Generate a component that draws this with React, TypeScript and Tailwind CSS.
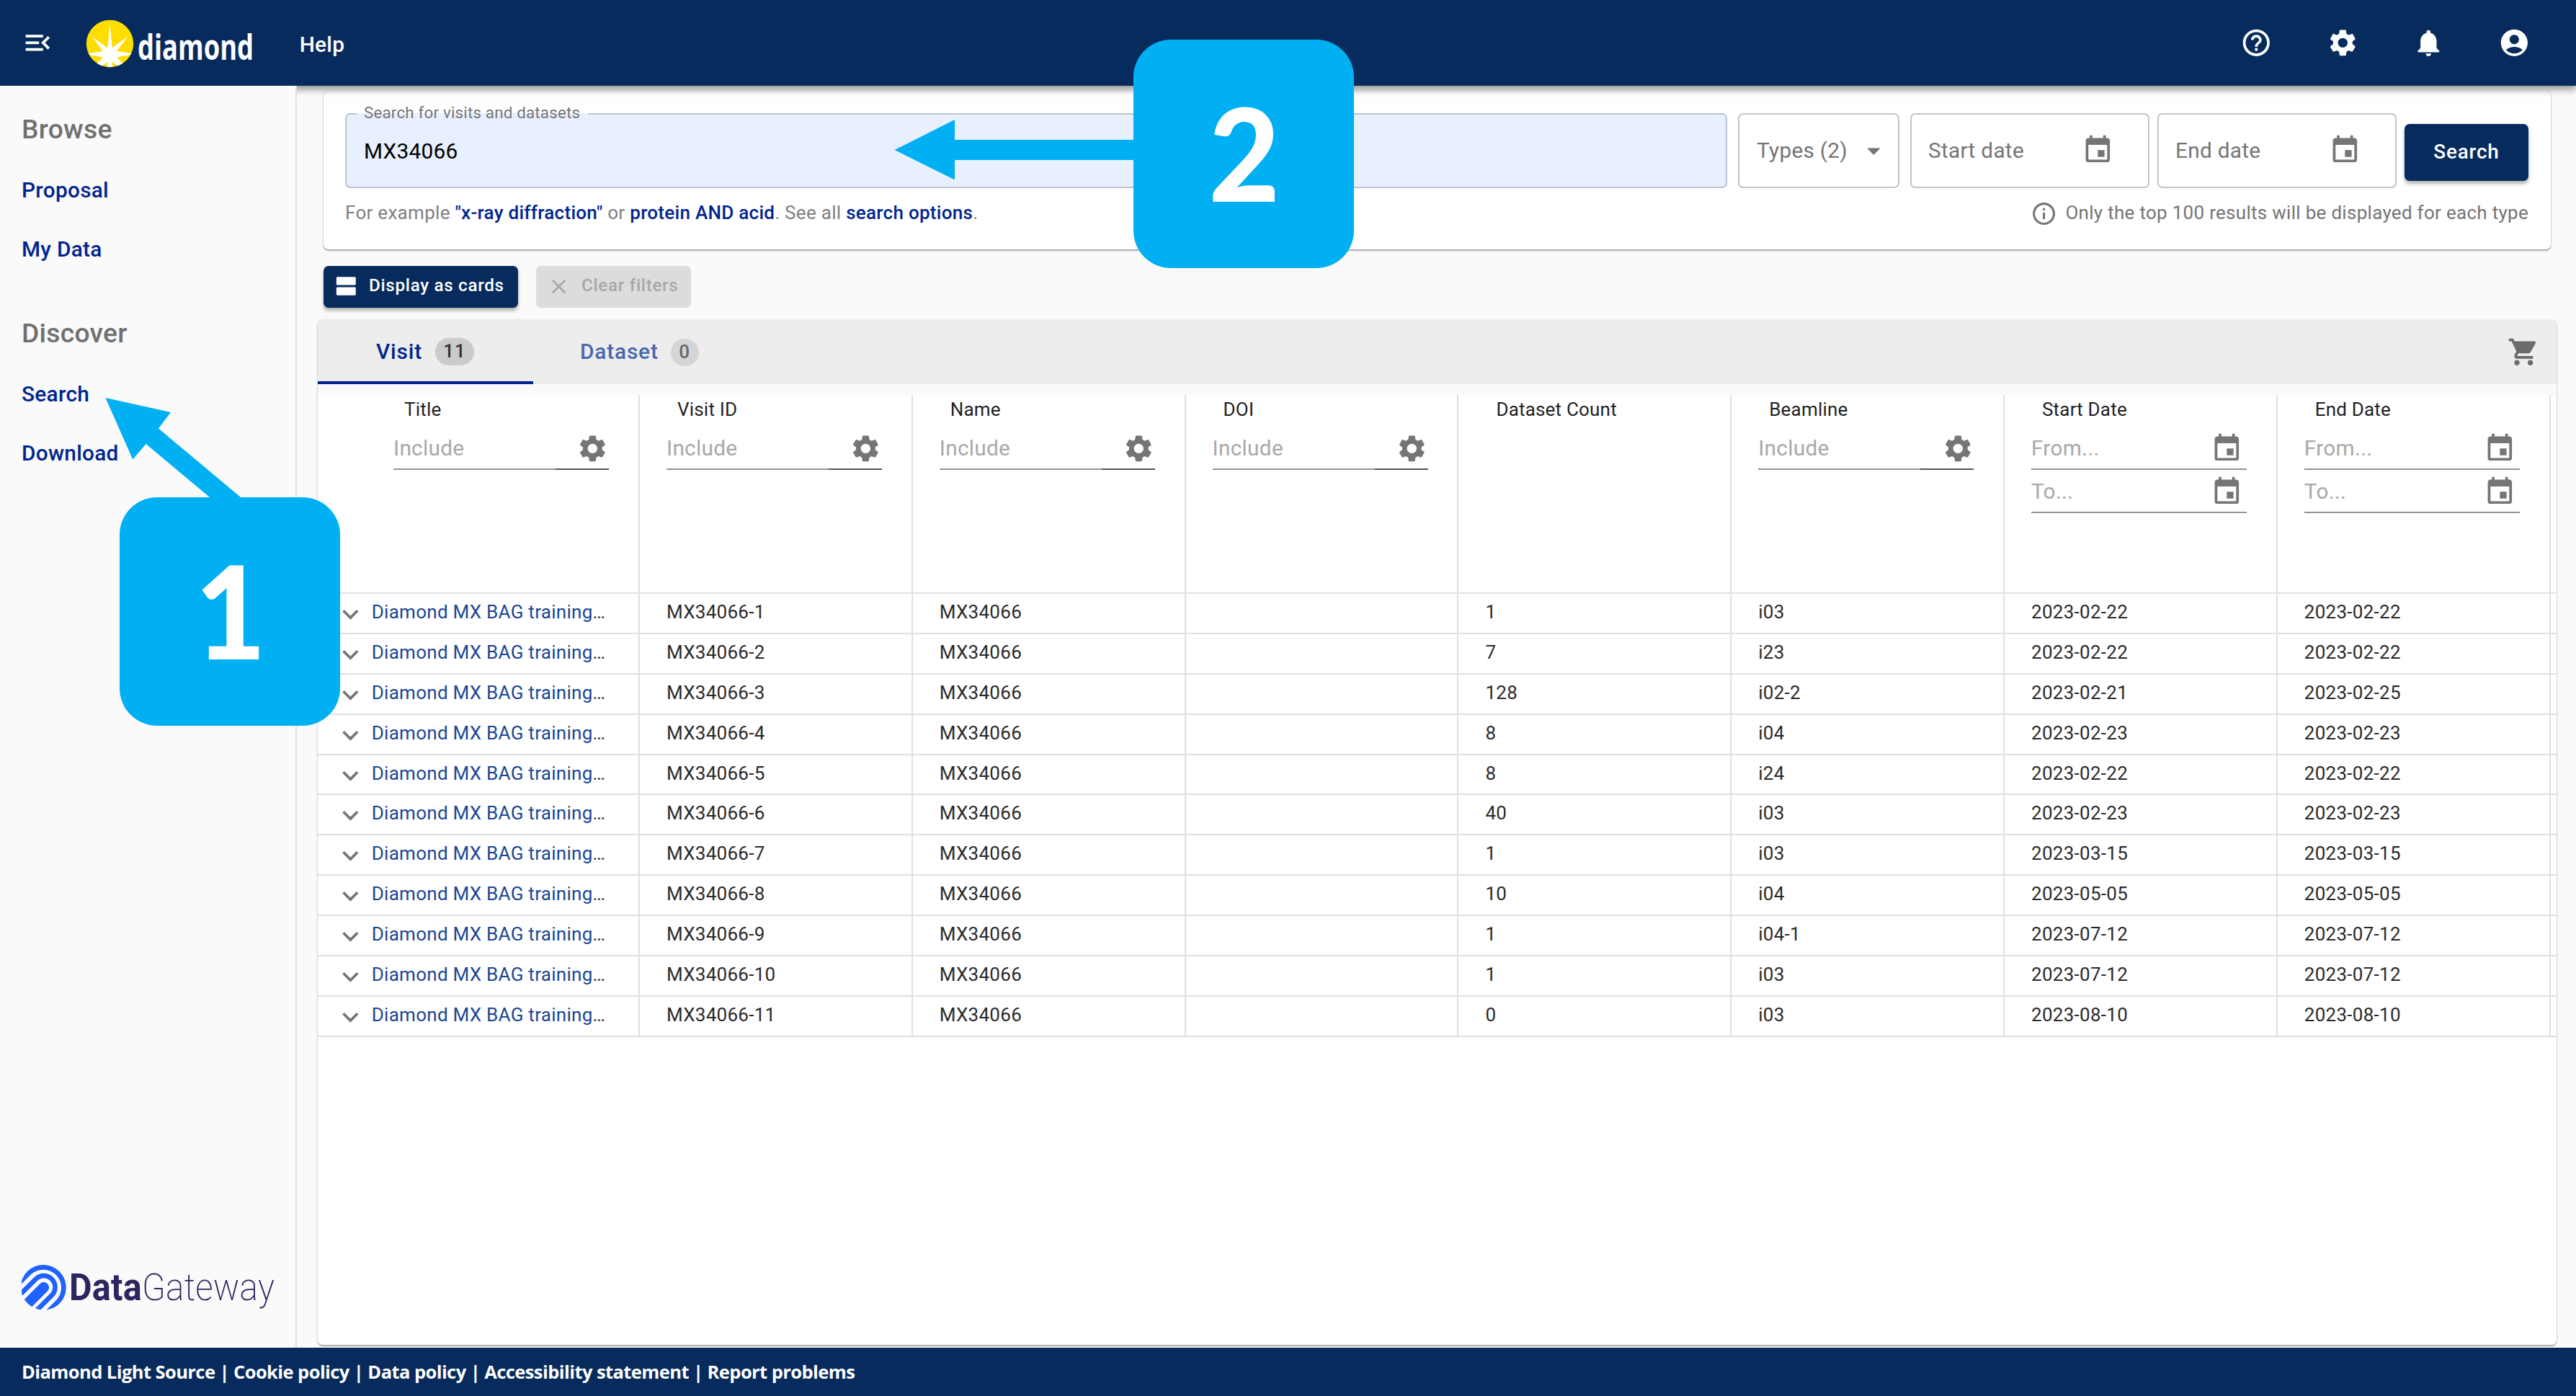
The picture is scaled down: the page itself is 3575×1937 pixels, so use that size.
import React from "react";
import {
  MdAccountCircle,
  MdArrowDropDown,
  MdClose,
  MdEvent,
  MdExpandMore,
  MdHelpOutline,
  MdInfoOutline,
  MdMenuOpen,
  MdNotifications,
  MdSettings,
  MdShoppingCart,
} from "react-icons/md";

const GRID = "grid grid-cols-[447px_repeat(7,378.8px)_1fr]";

type Filter = "text" | "date" | "none";
const columns: { label: string; filter: Filter }[] = [
  { label: "Title", filter: "text" },
  { label: "Visit ID", filter: "text" },
  { label: "Name", filter: "text" },
  { label: "DOI", filter: "text" },
  { label: "Dataset Count", filter: "none" },
  { label: "Beamline", filter: "text" },
  { label: "Start Date", filter: "date" },
  { label: "End Date", filter: "date" },
];

const rows: string[][] = [
  ["MX34066-1", "MX34066", "", "1", "i03", "2023-02-22", "2023-02-22"],
  ["MX34066-2", "MX34066", "", "7", "i23", "2023-02-22", "2023-02-22"],
  ["MX34066-3", "MX34066", "", "128", "i02-2", "2023-02-21", "2023-02-25"],
  ["MX34066-4", "MX34066", "", "8", "i04", "2023-02-23", "2023-02-23"],
  ["MX34066-5", "MX34066", "", "8", "i24", "2023-02-22", "2023-02-22"],
  ["MX34066-6", "MX34066", "", "40", "i03", "2023-02-23", "2023-02-23"],
  ["MX34066-7", "MX34066", "", "1", "i03", "2023-03-15", "2023-03-15"],
  ["MX34066-8", "MX34066", "", "10", "i04", "2023-05-05", "2023-05-05"],
  ["MX34066-9", "MX34066", "", "1", "i04-1", "2023-07-12", "2023-07-12"],
  ["MX34066-10", "MX34066", "", "1", "i03", "2023-07-12", "2023-07-12"],
  ["MX34066-11", "MX34066", "", "0", "i03", "2023-08-10", "2023-08-10"],
];

function DiamondLogo() {
  return (
    <svg className="ml-[45px] h-[80px] w-[236px] shrink-0 overflow-visible" viewBox="0 -4 236 80">
      <defs>
        <clipPath id="sun">
          <circle cx="32.5" cy="36.5" r="32.7" />
        </clipPath>
      </defs>
      <circle cx="32.5" cy="36.5" r="32.7" fill="#ffdd00" />
      <g clipPath="url(#sun)" fill="#fff">
        <circle cx="32.5" cy="52" r="10.5" />
        <path d="M32.5 8 L36 46 L29 46Z" />
        <path d="M8 27 L30 43 L25 50Z" />
        <path d="M57 27 L35 43 L40 50Z" />
        <path d="M-2 51 L26 46.500 L26 56Z" />
        <path d="M67 51 L39 46.500 L39 56Z" />
        <path d="M25 53 L32 59 L18 71 L13 66Z" />
        <path d="M40 53 L33 59 L47 71 L52 66Z" />
        <path d="M29.500 58 L35.500 58 L36.500 73 L28.500 73Z" />
      </g>
      <text x="71" y="59" fill="#fff" fontFamily="'Open Sans', sans-serif" fontWeight="700" fontSize="49" textLength="161" lengthAdjust="spacingAndGlyphs">
        diamond
      </text>
    </svg>
  );
}

function GatewayLogo() {
  return (
    <svg className="h-[80px] w-[362px]" viewBox="0 0 362 80">
      <defs>
        <clipPath id="gw">
          <circle cx="30.700" cy="36" r="31.700" />
        </clipPath>
      </defs>
      <g clipPath="url(#gw)">
        <g fill="none" stroke="#1f62ff" strokeWidth="6.700">
          <path d="M-9.300 36 L10.700 16 A28.300 28.300 0 0 1 50.700 56 L30.700 76" />
          <path d="M-10.500 54.800 L19.500 24.800 A15.800 15.800 0 0 1 41.900 47.200 L11.900 77.200" />
        </g>
        <path d="M-4.500 61.200 L25.500 31.200 A7.300 7.300 0 0 1 35.900 41.600 L5.900 71.600Z" fill="#1f62ff" />
      </g>
      <text x="66" y="54" fill="#2b2660" fontFamily="Roboto, sans-serif" fontSize="51" fontWeight="700" textLength="101" lengthAdjust="spacingAndGlyphs">
        Data
      </text>
      <text x="167" y="54" fill="#2b2660" fontFamily="Roboto, sans-serif" fontSize="51" fontWeight="200" textLength="184" lengthAdjust="spacingAndGlyphs">
        Gateway
      </text>
    </svg>
  );
}

function AgendaIcon() {
  return (
    <svg className="-mt-[2px] size-[34px]" viewBox="0 0 24 24" fill="currentColor">
      <path d="M20 13H3c-.55 0-1 .45-1 1v6c0 .55.45 1 1 1h17c.55 0 1-.45 1-1v-6c0-.55-.45-1-1-1zm0-10H3c-.55 0-1 .45-1 1v6c0 .55.45 1 1 1h17c.55 0 1-.45 1-1V4c0-.55-.45-1-1-1z" />
    </svg>
  );
}

function Header() {
  return (
    <header className="relative z-10 flex h-[119px] shrink-0 items-center bg-[#072b5d] text-white shadow-[0_4px_8px_rgba(0,0,0,0.3),0_8px_10px_rgba(0,0,0,0.14)]">
      <MdMenuOpen className="ml-[30px] size-[44.700px]" />
      <DiamondLogo />
      <span className="mt-[4px] ml-[60px] text-[29.800px] leading-none font-medium tracking-[0.28px]">Help</span>
      <div className="mr-[63px] ml-auto flex gap-[74.600px]">
        <MdHelpOutline className="size-[44.700px]" />
        <MdSettings className="size-[44.700px]" />
        <MdNotifications className="size-[44.700px]" />
        <MdAccountCircle className="size-[44.700px]" />
      </div>
    </header>
  );
}

function Sidebar() {
  return (
    <nav className="relative z-20 flex w-[412px] shrink-0 flex-col border-r-2 border-[#e0e0e0] bg-[#fafafa] pl-[30px] tracking-[0.28px] whitespace-nowrap">
      <div className="mt-[39px] h-[42px] text-[37.200px] leading-[42px] font-medium text-[#707070]">Browse</div>
      <div className="mt-[44px] flex flex-col gap-[42px] text-[29.800px] leading-[40px] font-medium text-[#00248f]">
        <span>Proposal</span>
        <span>My Data</span>
      </div>
      <div className="mt-[75px] h-[42px] text-[37.200px] leading-[42px] font-medium text-[#707070]">Discover</div>
      <div className="mt-[44px] flex flex-col gap-[42px] text-[29.800px] leading-[40px] font-medium text-[#00248f]">
        <span>Search</span>
        <span>Download</span>
      </div>
      <div className="mt-auto mb-[40px]">
        <GatewayLogo />
      </div>
    </nav>
  );
}

function DateBox({ label, className }: { label: string; className: string }) {
  return (
    <div className={`flex h-[104px] w-[332px] items-center rounded-[7px] border-2 border-[#c4c4c4] pl-[23px] ${className}`}>
      <span className="mt-px">{label}</span>
      <MdEvent className="mr-[47px] -mt-[2px] ml-auto size-[44.700px] text-[#757575]" />
    </div>
  );
}

function SearchPanel() {
  return (
    <section className="mt-[8px] mr-[35px] ml-[37px] h-[219px] shrink-0 rounded-[7px] bg-white pt-[30px] pr-[31px] pl-[30px] shadow-[0_2px_2px_rgba(0,0,0,0.3),0_0_3px_rgba(0,0,0,0.15)]">
      <div className="flex items-center text-[29.800px] tracking-[0.28px] text-[#757575]">
        <div className="relative h-[104px] w-[1918px] rounded-[7px] border-2 border-[#bcc3d1] bg-[#e8f0fe] pl-[24px] leading-[101px] text-black">
          <span className="absolute -top-[2px] left-[14px] h-[2px] w-[321px] bg-[#e8f0fe]" />
          <span className="absolute -top-[16px] left-[24px] text-[22.300px] leading-[26px] tracking-[0.21px] text-[#757575]">Search for visits and datasets</span>
          MX34066
        </div>
        <div className="ml-[15px] flex h-[104px] w-[224px] items-center rounded-[7px] border-2 border-[#c4c4c4] pl-[24px]">
          <span className="mt-px">Types (2)</span>
          <MdArrowDropDown className="mr-[11px] ml-auto size-[44.700px]" />
        </div>
        <DateBox label="Start date" className="ml-[15px]" />
        <DateBox label="End date" className="ml-[11px]" />
        <div className="mt-[4px] ml-auto flex h-[79px] w-[172px] items-center justify-center rounded-[7px] bg-[#072b5d] text-[27.900px] font-medium tracking-[0.8px] text-white shadow-[0_4px_5px_rgba(0,0,0,0.3)]">
          Search
        </div>
      </div>
      <div className="mt-[13px] flex items-center justify-between text-[26px] leading-[40px] tracking-[0.29px] text-[#808080]">
        <p>
          For example <b className="font-medium text-[#00248f]">"x-ray diffraction"</b> or{" "}
          <b className="font-medium text-[#00248f]">protein AND acid</b>. See all <b className="font-medium text-[#00248f]">search options</b>.
        </p>
        <p className="flex items-center gap-[11px] text-[#757575]">
          <MdInfoOutline className="mt-[4px] size-[37.200px]" />
          Only the top 100 results will be displayed for each type
        </p>
      </div>
    </section>
  );
}

function Toolbar() {
  return (
    <div className="mt-[23px] ml-[37px] flex h-[58px] shrink-0 gap-[25px] text-[24.200px] font-medium tracking-[0.7px]">
      <div className="flex w-[270px] items-center rounded-[7px] bg-[#072b5d] pl-[15px] whitespace-nowrap text-white shadow-[0_4px_5px_rgba(0,0,0,0.3)]">
        <AgendaIcon />
        <span className="-mt-[3px] ml-[14px]">Display as cards</span>
      </div>
      <div className="flex w-[215px] items-center rounded-[7px] bg-[#dcdcdc] pl-[15px] whitespace-nowrap text-[#a8a8a8]">
        <MdClose className="-mt-[2px] size-[33px]" />
        <span className="-mt-[3px] ml-[15px]">Clear filters</span>
      </div>
    </div>
  );
}

function Tabs() {
  return (
    <div className="flex h-[89px] bg-[#ededed] text-[29.800px] font-medium tracking-[0.85px]">
      <div className="flex w-[299px] items-center border-b-4 border-[#00248f] pt-[3px] pl-[81px] text-[#00248f]">
        Visit
        <span className="ml-[18px] h-[38px] w-[54px] rounded-full bg-[#cbcbcb] text-center text-[26px] leading-[37px] text-[#333]">11</span>
      </div>
      <div className="flex items-center pl-[65px] text-[#4867ad]">
        <span className="-mt-px">Dataset</span>
        <span className="ml-[17px] h-[38px] w-[39px] rounded-full bg-[#d5d5d5] text-center text-[26px] leading-[37px] text-[#666]">0</span>
      </div>
      <MdShoppingCart className="mt-[22px] mr-[23px] ml-auto size-[44.700px] text-[#6b6b6b]" />
    </div>
  );
}

function TextFilter() {
  return (
    <div className="flex h-[50px] w-[299px] items-start text-[29.800px] leading-[40px] tracking-[0.28px] text-[#a8a8a8]">
      <span className="h-full w-[225px] border-b-2 border-[#949494]">Include</span>
      <span className="flex h-full w-[74px] justify-end border-b-2 border-[#555]">
        <MdSettings className="-mt-[2px] size-[44.700px] text-[#757575]" />
      </span>
    </div>
  );
}

function DateFilter({ label }: { label: string }) {
  return (
    <div className="mb-[10px] flex h-[50px] w-[299px] justify-between border-b-2 border-[#949494] pr-[5px] text-[29.800px] leading-[40px] tracking-[0.28px] text-[#a8a8a8]">
      <span>{label}</span>
      <MdEvent className="-mt-[2px] size-[44.700px] text-[#757575]" />
    </div>
  );
}

function Table() {
  return (
    <div className="mt-[15px] flex-1 rounded-b-[7px] bg-white text-[26px] tracking-[0.28px] text-[#2a2a2a]">
      <div className={`${GRID} h-[276px] border-b-2 border-[#e0e0e0]`}>
        {columns.map((c, i) => (
          <div key={c.label} className={`border-r-2 border-[#e0e0e0] ${i === 0 ? "pl-[105px]" : "pl-[37px]"}`}>
            <div className="pt-[2px] pl-[15px] leading-[37px] tracking-[0.19px] text-[#1f1f1f]">{c.label}</div>
            <div className="pt-[15px]">
              {c.filter === "text" && <TextFilter />}
              {c.filter === "date" && (
                <>
                  <DateFilter label="From..." />
                  <DateFilter label="To..." />
                </>
              )}
            </div>
          </div>
        ))}
      </div>
      {rows.map((r) => (
        <div key={r[0]} className={`${GRID} h-[55.900px] border-b-2 border-[#e0e0e0] leading-[50px]`}>
          <div className="flex border-r-2 border-[#e0e0e0] pl-[23px]">
            <MdExpandMore className="mt-[6px] size-[44.700px] text-[#757575]" />
            <span className="ml-[7px] text-[#1a4694]">
              Diamond MX BAG training<span className="text-[#2a2a2a]">…</span>
            </span>
          </div>
          {r.map((v, i) => (
            <div key={i} className="border-r-2 border-[#e0e0e0] pl-[37px]">
              {v}
            </div>
          ))}
        </div>
      ))}
    </div>
  );
}

function Callout({ n, className }: { n: string; className: string }) {
  return (
    <div className={`absolute z-40 flex h-[317px] w-[306px] items-center justify-center rounded-[52px] bg-[#00b0f2] font-['Lato',sans-serif] text-[179px] leading-none font-black text-white ${className}`}>
      <span className="-mt-[7px] ml-[2px] scale-x-95">{n}</span>
    </div>
  );
}

export default function App() {
  return (
    <div className="relative flex h-[1937px] w-[3575px] flex-col overflow-hidden bg-[#fafafa] font-['Roboto',sans-serif]">
      <Header />
      <div className="flex min-h-0 flex-1">
        <Sidebar />
        <main className="flex min-w-0 flex-1 flex-col">
          <SearchPanel />
          <Toolbar />
          <section className="mt-[17px] mr-[27px] mb-[4px] ml-[29px] flex min-h-0 flex-1 flex-col rounded-[7px] shadow-[0_2px_2px_rgba(0,0,0,0.3),0_0_3px_rgba(0,0,0,0.15)]">
            <Tabs />
            <Table />
          </section>
        </main>
      </div>
      <footer className="relative z-10 h-[67px] shrink-0 bg-[#072b5d] pl-[30px] font-['Open_Sans',sans-serif] text-[25.500px] leading-[66px] font-bold tracking-[-0.57px] text-white">
        Diamond Light Source | Cookie policy | Data policy | Accessibility statement | Report problems
      </footer>

      <svg className="absolute top-[540px] left-[140px] z-30 h-[160px] w-[210px]" viewBox="140 540 210 160">
        <path d="M146.400 552 L237 572 L220 594.500 L346 700 L303 700 L202.600 616 L184.300 637.500Z" fill="#00b0f2" />
      </svg>
      <svg className="absolute top-[160px] left-[1240px] z-30 h-[96px] w-[340px]" viewBox="1240 160 340 96">
        <path d="M1241.500 208 L1325 166 L1325 194 L1580 194 L1580 222 L1325 222 L1325 249.500Z" fill="#00b0f2" />
      </svg>
      <Callout n="1" className="top-[690px] left-[166px]" />
      <Callout n="2" className="top-[55px] left-[1573px]" />
    </div>
  );
}
